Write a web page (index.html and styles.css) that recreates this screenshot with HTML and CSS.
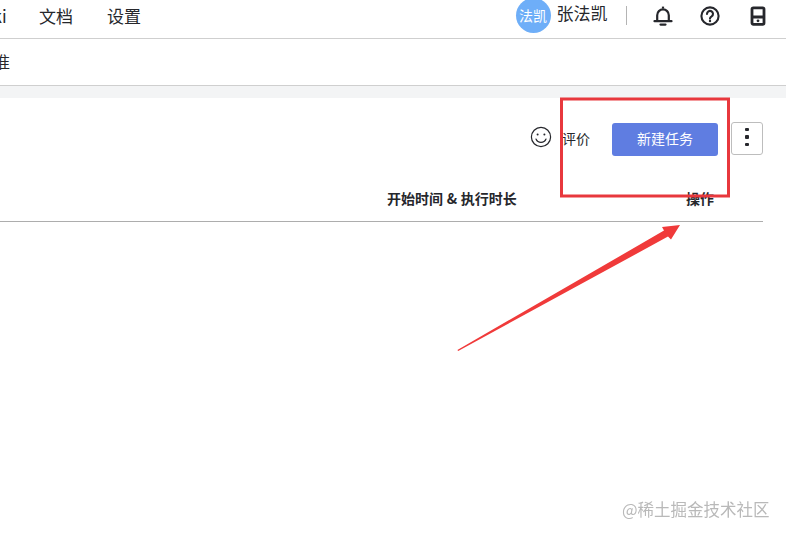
FILE: index.html
```html
<!DOCTYPE html>
<html lang="zh">
<head>
<meta charset="utf-8">
<title>任务</title>
<link rel="stylesheet" href="styles.css">
</head>
<body>
<div class="page">
  <header class="topbar">
    <nav class="nav">
      <a class="nav-item nav-clipped">Wiki</a>
      <a class="nav-item nav-docs">文档</a>
      <a class="nav-item nav-settings">设置</a>
    </nav>
    <div class="user">
      <span class="avatar">法凯</span>
      <span class="username">张法凯</span>
      <span class="divider"></span>
      <svg class="icon icon-bell" width="20" height="20" viewBox="0 0 20 20" fill="none" stroke="#26272c" stroke-width="2.2">
        <path d="M1.5 15.2h17M4.2 15V9.2a5.8 5.8 0 0 1 11.6 0V15" stroke-linecap="round"/>
        <path d="M7.5 18.6h5" stroke-linecap="round"/>
        <path d="M10 .6v2"/>
      </svg>
      <svg class="icon icon-help" width="20" height="20" viewBox="0 0 20 20" fill="none" stroke="#26272c" stroke-width="2.1">
        <circle cx="10" cy="10" r="8.6"/>
        <path d="M7 7.9a3 3 0 1 1 4.6 2.5c-1 .6-1.6 1.1-1.6 2.2" stroke-linecap="round"/>
        <circle cx="10" cy="15" r="1.2" fill="#26272c" stroke="none"/>
      </svg>
      <svg class="icon icon-device" width="16" height="20" viewBox="0 0 16 20" fill="none" stroke="#26272c" stroke-width="2.8">
        <rect x="2" y="1.8" width="12" height="16.6" rx="1.4"/>
        <path d="M2 11h12" stroke-width="3"/>
        <circle cx="8" cy="14.8" r="1.4" fill="#26272c" stroke="none"/>
      </svg>
    </div>
  </header>

  <div class="subbar"><span class="subbar-text">标准</span></div>
  <div class="band"></div>

  <main class="content">
    <div class="toolbar">
      <svg class="smile" width="22" height="22" viewBox="0 0 22 22" fill="none" stroke="#26272c" stroke-width="1.2">
        <circle cx="11" cy="11" r="9.6"/>
        <circle cx="7.6" cy="8.4" r="1" fill="#26272c" stroke="none"/>
        <circle cx="14.4" cy="8.4" r="1" fill="#26272c" stroke="none"/>
        <path d="M6 13a5.4 5.4 0 0 0 10 0" stroke-linecap="round"/>
      </svg>
      <span class="rate">评价</span>
      <button class="primary">新建任务</button>
      <button class="more" aria-label="更多"><span class="dot"></span><span class="dot"></span><span class="dot"></span></button>
    </div>
    <div class="table-head">
      <span></span>
      <span class="th">开始时间 &amp; 执行时长</span>
      <span class="th">操作</span>
    </div>
  </main>

  <svg class="annotation" width="786" height="535" viewBox="0 0 786 535" fill="none">
    <rect x="561.5" y="99" width="167" height="97" stroke="#e8383d" stroke-width="3"/>
    <path d="M457.4 350 664 230.6 662 227 680 225 671 239.5 668 236.6 458.2 351Z" fill="#f03a3a"/>
  </svg>
  <div class="watermark">@稀土掘金技术社区</div>
</div>
</body>
</html>
```
FILE: styles.css
```css
* { box-sizing: border-box; }
html, body { margin: 0; padding: 0; background: #fff; }
body {
  font-family: "Noto Sans CJK SC", "Liberation Sans", sans-serif;
  color: #26272c;
}
.page {
  position: relative;
  width: 786px;
  height: 535px;
  overflow: hidden;
  background: #fff;
}
.topbar {
  display: flex;
  justify-content: space-between;
  align-items: center;
  height: 39px;
  padding-bottom: 7px;
  border-bottom: 1px solid #cfcfcf;
}
.nav { display: flex; align-items: center; font-size: 17px; line-height: 24px; }
.nav-clipped { margin-left: -27px; width: 34px; white-space: nowrap; }
.nav-docs { margin-left: 32px; }
.nav-settings { margin-left: 34px; }
.user { display: flex; align-items: center; height: 24px; }
.avatar {
  display: flex;
  align-items: center;
  justify-content: center;
  width: 35px;
  height: 35px;
  flex: none;
  padding-bottom: 2px;
  border-radius: 50%;
  background: #6eaef8;
  color: #fff;
  font-size: 14px;
  line-height: 1;
}
.username { margin-left: 6px; font-size: 17px; line-height: 24px; margin-top: -5px; }
.divider { width: 1px; height: 19px; margin-left: 18.5px; background: #b4b4b4; }
.icon { flex: none; display: block; }
.icon-bell { margin-left: 26px; }
.icon-help { margin-left: 27px; }
.icon-device { margin-left: 30px; margin-right: 20px; }
.subbar {
  display: flex;
  align-items: center;
  height: 47px;
  padding-bottom: 3px;
  border-bottom: 1px solid #cfcfcf;
  font-size: 16px;
  overflow: hidden;
}
.subbar-text { margin-left: -22px; }
.band { height: 12px; background: #f3f4f5; }
.content { display: flex; flex-direction: column; }
.toolbar {
  display: flex;
  align-items: center;
  height: 33px;
  margin-top: 24px;
  padding-right: 23px;
  justify-content: flex-end;
}
.smile { flex: none; margin-right: 10px; margin-top: -3px; }
.rate { font-size: 14px; line-height: 20px; margin-right: 22px; margin-top: -1px; }
.primary {
  width: 106px;
  height: 33px;
  margin-top: 1px;
  margin-right: 13px;
  padding: 0 0 2px;
  border: 0;
  border-radius: 3px;
  background: #5f7de1;
  color: #fff;
  font: 14px/31px "Noto Sans CJK SC", sans-serif;
}
.more {
  display: flex;
  flex-direction: column;
  align-items: center;
  justify-content: center;
  gap: 4px;
  width: 32px;
  height: 33px;
  padding: 0 0 3px;
  border: 1px solid #bdbdbd;
  border-radius: 3px;
  background: #fff;
}
.dot { width: 3.5px; height: 3.5px; background: #26272c; border-radius: 1px; }
.table-head {
  display: grid;
  grid-template-columns: 387px 299px 1fr;
  align-items: center;
  width: 763px;
  height: 34px;
  margin-top: 33px;
  border-bottom: 1px solid #adadad;
  padding-bottom: 15px;
  font-size: 14px;
  line-height: 20px;
  font-weight: 700;
}
.th { white-space: nowrap; word-spacing: 0.5px; }
.annotation { position: absolute; left: 0; top: 0; pointer-events: none; }
.watermark {
  position: absolute;
  left: 622px;
  top: 497px;
  font-size: 16.5px;
  line-height: 24px;
  color: #b9b9b9;
  white-space: nowrap;
  filter: blur(0.4px);
}
```
